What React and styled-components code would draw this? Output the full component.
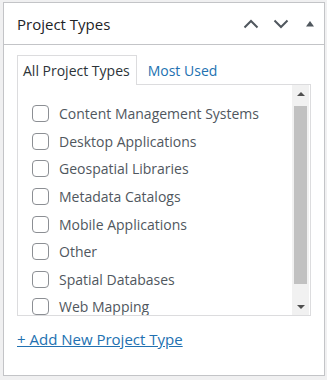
import React from "react";
import styled, { createGlobalStyle } from "styled-components";

const Global = createGlobalStyle`
  html, body { margin: 0; padding: 0; background: #f0f0f1; }
  body { font-family: "Open Sans", "Noto Sans", sans-serif; color: #3c434a; }
`;

const Page = styled.div`
  padding: 2px 2px 4px 3px;
  width: 327px;
  height: 380px;
  box-sizing: border-box;
`;

const Box = styled.div`
  background: #fff;
  border: 1px solid #c3c4c7;
  height: 374px;
  box-sizing: border-box;
  display: flex;
  flex-direction: column;
`;

const Header = styled.div`
  height: 42px;
  box-sizing: border-box;
  border-bottom: 1px solid #c3c4c7;
  display: flex;
  align-items: center;
  padding: 0 0 0 13px;
`;

const Title = styled.h2`
  margin: 0;
  flex: 1;
  font-size: 15px;
  font-weight: 500;
  color: #1d2327;
`;

const Controls = styled.div`
  display: flex;
  align-items: center;
`;

const CtrlBtn = styled.span`
  width: ${(p) => p.$w}px;
  height: 36px;
  display: flex;
  align-items: center;
  justify-content: center;
`;

const Body = styled.div`
  padding: 10px 13px 0 13px;
`;

const Tabs = styled.div`
  display: flex;
  align-items: flex-end;
`;

const Tab = styled.div`
  height: 30px;
  box-sizing: border-box;
  display: flex;
  align-items: center;
  padding: 0 6px 0 5px;
  font-size: 14px;
  color: ${(p) => (p.$active ? "#2c3338" : "#2271b1")};
  background: ${(p) => (p.$active ? "#fff" : "transparent")};
  border: 1px solid ${(p) => (p.$active ? "#dcdcde" : "transparent")};
  border-bottom: none;
  margin-bottom: -1px;
  position: relative;
  z-index: 1;
  margin-right: ${(p) => (p.$active ? "5px" : "0")};
`;

const Panel = styled.div`
  border: 1px solid #dcdcde;
  height: 232px;
  box-sizing: border-box;
  display: flex;
`;

const List = styled.ul`
  list-style: none;
  margin: 0;
  padding: 15px 0 0 14px;
  flex: 1;
  overflow: hidden;
`;

const Item = styled.li`
  height: 27.6px;
  display: flex;
  align-items: center;
  gap: 10px;
  font-size: 14px;
  color: #50575e;
  white-space: nowrap;
`;

const Check = styled.span`
  width: 17px;
  height: 17px;
  box-sizing: border-box;
  border: 1px solid #8c8f94;
  border-radius: 4px;
  background: #fff;
  flex-shrink: 0;
`;

const Scrollbar = styled.div`
  width: 17px;
  margin-right: 1px;
  background: #f1f1f1;
  display: flex;
  flex-direction: column;
  align-items: stretch;
`;

const Arrow = styled.div`
  height: 17px;
  display: flex;
  align-items: center;
  justify-content: center;
  &::after {
    content: "";
    width: 0;
    height: 0;
    border-left: 4px solid transparent;
    border-right: 4px solid transparent;
    ${(p) =>
      p.$down
        ? "border-top: 4px solid #505050;"
        : "border-bottom: 4px solid #505050;"}
  }
`;

const Track = styled.div`
  flex: 1;
  padding: 4px 2px 0 2px;
`;

const Thumb = styled.div`
  height: 178px;
  background: #c1c1c1;
`;

const AddLink = styled.a`
  display: inline-block;
  margin-top: 13px;
  font-size: 15px;
  color: #2271b1;
  text-decoration: underline;
  font-weight: 500;
`;

const items = [
  "Content Management Systems",
  "Desktop Applications",
  "Geospatial Libraries",
  "Metadata Catalogs",
  "Mobile Applications",
  "Other",
  "Spatial Databases",
  "Web Mapping",
];

const Chevron = ({ up }) => (
  <svg width="16" height="10" viewBox="0 0 16 10">
    <path
      d={up ? "M1.5 8.5 L8 2 L14.5 8.5" : "M1.5 1.5 L8 8 L14.5 1.5"}
      fill="none"
      stroke="#50575e"
      strokeWidth="2"
    />
  </svg>
);

export default function App() {
  return (
    <>
      <Global />
      <Page>
        <Box>
          <Header>
            <Title>Project Types</Title>
            <Controls>
              <CtrlBtn $w={30}>
                <Chevron up />
              </CtrlBtn>
              <CtrlBtn $w={30}>
                <Chevron />
              </CtrlBtn>
              <CtrlBtn $w={28}>
                <svg width="10" height="7" viewBox="0 0 10 7">
                  <path d="M1 6.5 L5 1 L9 6.5 Z" fill="#50575e" />
                </svg>
              </CtrlBtn>
            </Controls>
          </Header>
          <Body>
            <Tabs>
              <Tab $active>All Project Types</Tab>
              <Tab>Most Used</Tab>
            </Tabs>
            <Panel>
              <List>
                {items.map((t) => (
                  <Item key={t}>
                    <Check />
                    {t}
                  </Item>
                ))}
              </List>
              <Scrollbar>
                <Arrow />
                <Track>
                  <Thumb />
                </Track>
                <Arrow $down />
              </Scrollbar>
            </Panel>
            <AddLink href="#">+ Add New Project Type</AddLink>
          </Body>
        </Box>
      </Page>
    </>
  );
}
